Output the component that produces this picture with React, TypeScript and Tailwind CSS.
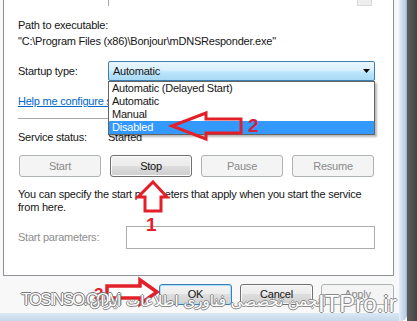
import React from "react";

function WinButton({ label, disabled, focused, w }: { label: string; disabled?: boolean; focused?: boolean; w: string }) {
  const base = "flex items-center justify-center rounded-[3px] border";
  if (disabled) {
    return (
      <div className={`${base} ${w} h-full border-[#adb2b5] bg-[#f4f4f4] text-[#8a8a8a]`}>{label}</div>
    );
  }
  if (focused) {
    return (
      <div className={`${base} ${w} h-full border-[#3c7fb1] text-[#111] shadow-[inset_0_0_0_1px_#a6e0f8] bg-[linear-gradient(#f4f4f4_0%,#ececec_50%,#dedede_50%,#d2d2d2_100%)]`}>
        {label}
      </div>
    );
  }
  return (
    <div className={`${base} ${w} h-full border-[#707070] text-[#111] shadow-[inset_0_0_0_1px_#fcfcfc] bg-[linear-gradient(#f2f2f2_0%,#ebebeb_50%,#dddddd_50%,#cfcfcf_100%)]`}>
      {label}
    </div>
  );
}

export default function App() {
  return (
    <div className="relative w-[417px] h-[321px] overflow-hidden flex font-['Liberation_Sans',Arial,sans-serif] text-[11px] leading-[13px] tracking-[-0.22px] text-[#151515]">
      <div className="w-[399px] h-[321px] flex flex-col bg-[#f8f8f8]">
        <div className="h-[313px] flex flex-col">
          {/* tab page */}
          <div className="ml-[3px] w-[391px] h-[276px] border-x border-b border-[#8e9297] bg-white pl-[14px] flex flex-col">
            <div className="h-[6px] flex">
              <div className="ml-[90px] w-px h-full bg-[#a5a5a5]" />
              <div className="ml-[248px] w-[15px] h-full bg-[#eeeeee] border-x border-b border-[#d9d9d9]" />
            </div>
            <div className="mt-[13px]">Path to executable:</div>
            <div className="mt-[3px]">"C:\Program Files (x86)\Bonjour\mDNSResponder.exe"</div>
            <div className="mt-[13px] flex items-center h-[20px]">
              <div className="w-[90px]">Startup type:</div>
              <div className="relative w-[267px] h-[20px]">
                <div className="w-full h-full flex items-center justify-between pl-[4px] pr-[4px] rounded-[2px] border border-[#3c7fb1] bg-[linear-gradient(#eaf6fd_0%,#d9f0fc_45%,#bee6fd_55%,#a7d9f5_100%)]">
                  <span>Automatic</span>
                  <svg width="7" height="4" viewBox="0 0 7 4">
                    <polygon points="0,0 7,0 3.5,4" fill="#000" />
                  </svg>
                </div>
                <div className="absolute left-0 top-[20px] z-10 w-[267px] border border-[#646464] bg-white shadow-[2px_2px_2px_rgba(0,0,0,0.28)] flex flex-col">
                  <div className="h-[13px] pl-[3px]">Automatic (Delayed Start)</div>
                  <div className="h-[13px] pl-[3px]">Automatic</div>
                  <div className="h-[13px] pl-[3px]">Manual</div>
                  <div className="h-[13px] pl-[3px] bg-[#3399ff] text-white">Disabled</div>
                </div>
              </div>
            </div>
            <div className="mt-[14px] w-[90px] overflow-hidden whitespace-nowrap text-[#0066cc] underline underline-offset-[1px]">
              Help me configure service startup options.
            </div>
            <div className="mt-[10px] w-[357px] h-px bg-[#a8a8a8]" />
            <div className="mt-[12px] flex">
              <div className="w-[90px]">Service status:</div>
              <div>Started</div>
            </div>
            <div className="mt-[11px] ml-px h-[22px] flex gap-[9px]">
              <WinButton label="Start" disabled w="w-[82px]" />
              <WinButton label="Stop" w="w-[82px]" />
              <WinButton label="Pause" disabled w="w-[82px]" />
              <WinButton label="Resume" disabled w="w-[82px]" />
            </div>
            <div className="mt-[11px]">
              You can specify the start parameters that apply when you start the service
              <br />
              from here.
            </div>
            <div className="mt-[12px] h-[23px] flex items-center">
              <div className="w-[108px] text-[#8d8d8d]">Start parameters:</div>
              <div className="w-[249px] h-[23px] border border-[#abadb3] bg-white" />
            </div>
          </div>
          {/* dialog buttons */}
          <div className="mt-[8px] h-[21px] flex justify-end gap-[8px] pr-[5px]">
            <WinButton label="OK" focused w="w-[73px]" />
            <WinButton label="Cancel" w="w-[73px]" />
            <WinButton label="Apply" disabled w="w-[73px]" />
          </div>
        </div>
        <div className="h-[8px] bg-[linear-gradient(#dbe7f4,#c6d8ec)]" />
      </div>
      <div className="w-[8px] h-[321px] rounded-br-[6px] bg-[linear-gradient(90deg,#e6eef7_0%,#cddcee_40%,#b9cde4_85%,#8ea4bd_100%)]" />
      <div className="flex-1 h-[321px] bg-[linear-gradient(90deg,#5e5e5e,#444444)]" />

      {/* annotations */}
      <svg className="absolute left-0 top-0 z-20 pointer-events-none" width="417" height="321" viewBox="0 0 417 321">
        <polygon
          points="153,182 167,197 161,197 161,211 145,211 145,197 138,197"
          fill="#ffffff"
          stroke="#e3202a"
          strokeWidth="3"
          strokeLinejoin="miter"
        />
        <polygon
          points="172,126 206,113 206,119 241,119 241,133 206,133 206,139"
          fill="none"
          stroke="#e3202a"
          strokeWidth="3"
          strokeLinejoin="miter"
        />
        <polygon
          points="157,292 140,280 140,286 107,286 107,298 140,298 140,304"
          fill="#ffffff"
          stroke="#e3202a"
          strokeWidth="3.5"
          strokeLinejoin="miter"
        />
      </svg>
      <div className="absolute left-[146px] top-[215px] z-20 text-[19px] leading-none font-bold tracking-normal text-[#e3202a]">1</div>
      <div className="absolute left-[248px] top-[116px] z-20 text-[19px] leading-none font-bold tracking-normal text-[#d8203a]">2</div>
      <div className="absolute left-[94px] top-[286px] z-20 text-[17px] leading-none font-bold tracking-normal text-[#e3202a]">3</div>

      {/* watermark */}
      <div className="absolute left-[21px] top-[291px] z-30 text-[17px] leading-none tracking-[-2px] text-white [text-shadow:1px_0_#777,-1px_0_#777,0_1px_#777,0_-1px_#777]">
        TOSINSO.COM
      </div>
      <div
        dir="rtl"
        className="absolute left-[22px] top-[294px] w-[304px] z-30 text-right font-['DejaVu_Sans',sans-serif] text-[15px] leading-none tracking-normal text-white [text-shadow:1px_0_#888,-1px_0_#888,0_1px_#888,0_-1px_#888]"
      >
        انجمن تخصصی فناوری اطلاعات ایران
      </div>
      <div className="absolute left-[318px] top-[292px] z-30 text-[24px] leading-none tracking-normal text-white [text-shadow:1px_0_#888,-1px_0_#888,0_1px_#888,0_-1px_#888]">
        ITPro.ir
      </div>
    </div>
  );
}
